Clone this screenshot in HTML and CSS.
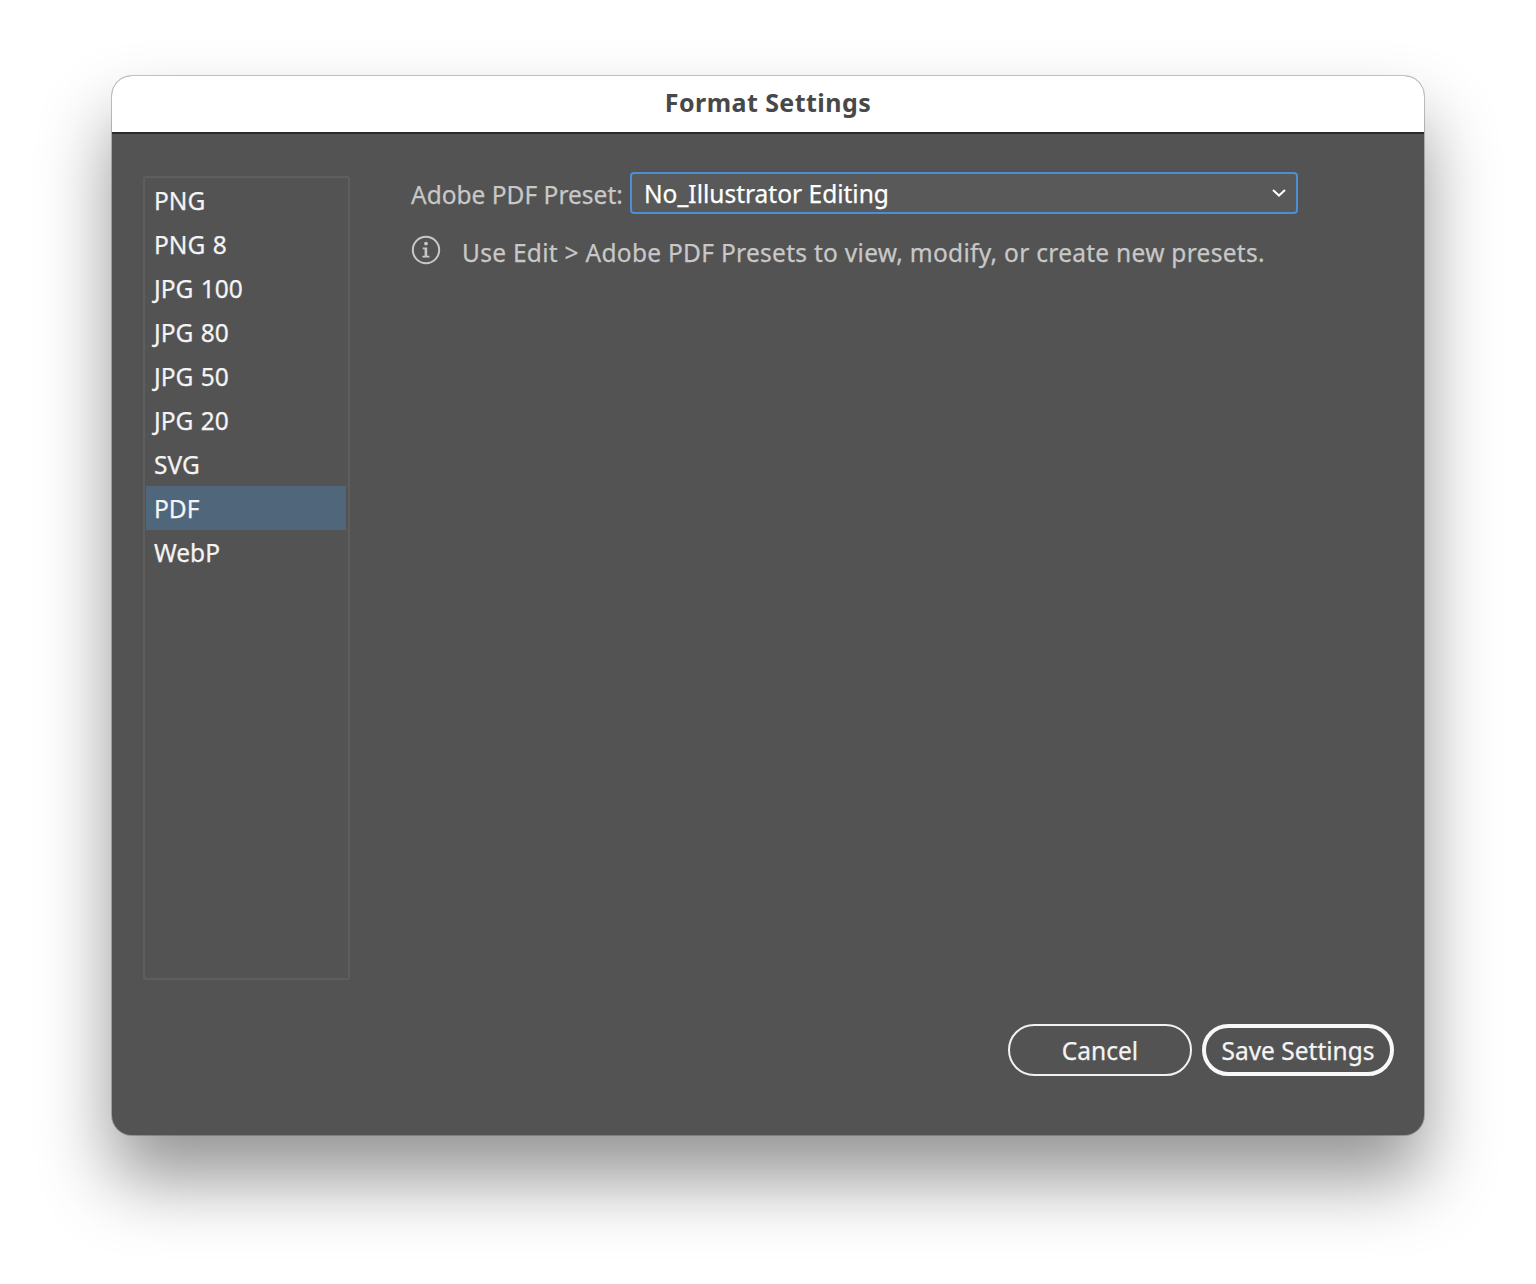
FILE: index.html
```html
<!DOCTYPE html>
<html lang="en">
<head>
<meta charset="utf-8">
<title>Format Settings</title>
<link rel="stylesheet" href="styles.css">
</head>
<body>
<main class="dialog">
  <header class="titlebar">Format Settings</header>
  <div class="content">
    <div class="panes">
      <ul class="format-list">
        <li class="format-item">PNG</li>
        <li class="format-item">PNG 8</li>
        <li class="format-item">JPG 100</li>
        <li class="format-item">JPG 80</li>
        <li class="format-item">JPG 50</li>
        <li class="format-item">JPG 20</li>
        <li class="format-item">SVG</li>
        <li class="format-item selected">PDF</li>
        <li class="format-item">WebP</li>
      </ul>
      <section class="settings">
        <div class="preset-row">
          <span class="preset-label">Adobe PDF Preset:</span>
          <div class="select">
            <span class="select-value">No_Illustrator Editing</span>
            <svg class="chevron" width="14" height="8" viewBox="0 0 14 8" aria-hidden="true"><path d="M1 1l6 5.6L13 1" fill="none" stroke="#fff" stroke-width="2"/></svg>
          </div>
        </div>
        <div class="info-row">
          <svg class="info-icon" width="30" height="30" viewBox="0 0 30 30" aria-hidden="true"><circle cx="15" cy="15" r="13.2" fill="none" stroke="#c8c8c8" stroke-width="2"/><circle cx="15" cy="8.6" r="1.9" fill="#c8c8c8"/><path d="M11.8 12.6h4.4v8.2h2.2v1.7h-7v-1.7h2.2v-6.5h-1.8z" fill="#c8c8c8"/></svg>
          <span class="info-text">Use Edit &gt; Adobe PDF Presets to view, modify, or create new presets.</span>
        </div>
      </section>
    </div>
    <div class="actions">
      <button class="btn btn-cancel" type="button">Cancel</button>
      <button class="btn btn-primary" type="button">Save Settings</button>
    </div>
  </div>
</main>
</body>
</html>
```
FILE: styles.css
```css
* { box-sizing: border-box; }
html, body { margin: 0; height: 100%; }
body {
  background: #fff;
  padding: 76px 112px 0;
  font-family: "Noto Sans", "DejaVu Sans", sans-serif;
  overflow: hidden;
  -webkit-text-stroke: .25px currentColor;
}
.dialog {
  width: 1312px;
  height: 1059px;
  border-radius: 20px;
  overflow: hidden;
  display: flex;
  flex-direction: column;
  background: #535353;
  box-shadow: 0 0 0 1px rgba(0,0,0,.22), 0 44px 72px rgba(0,0,0,.42);
}
.titlebar {
  height: 58px;
  flex: none;
  background: #fff;
  border-bottom: 2px solid #2b2b2b;
  color: #484848;
  font-size: 25px;
  font-weight: 700;
  letter-spacing: .45px;
  text-align: center;
  line-height: 53px;
  -webkit-text-stroke: 0;
}
.content {
  flex: 1;
  display: flex;
  flex-direction: column;
  padding: 42px 30px 59px 31px;
}
.panes { display: flex; flex: none; height: 804px; }
.format-list {
  list-style: none;
  margin: 0;
  padding: 0 2px 0 1px;
  width: 207px;
  flex: none;
  border: 2px solid #5e5e5e;
  border-radius: 3px;
}
.format-item {
  height: 44px;
  padding-left: 8px;
  color: #f4f4f4;
  font-size: 24.5px;
  line-height: 46px;
  word-spacing: 1px;
}
.format-item.selected { background: #50667b; }
.settings { margin-left: 61px; margin-top: -4px; width: 888px; flex: none; }
.preset-row { display: flex; align-items: center; height: 42px; }
.preset-label {
  color: #c8c8c8;
  font-size: 24.5px;
  margin-top: 3px;
  width: 219px;
  flex: none;
  white-space: nowrap;
}
.select {
  width: 668px;
  height: 42px;
  flex: none;
  border: 2px solid #4a90d9;
  border-radius: 4px;
  background: #595959;
  display: flex;
  align-items: center;
  justify-content: space-between;
  padding: 0 10px 0 12px;
  color: #fff;
  font-size: 24.5px;
}
.info-row { display: flex; align-items: flex-start; margin-top: 21px; color: #c8c8c8; }
.info-icon { flex: none; }
.info-text { margin-left: 21px; font-size: 24.5px; letter-spacing: .28px; line-height: 36px; white-space: nowrap; }
.actions { display: flex; justify-content: flex-end; gap: 10px; margin-top: 44px; }
.btn {
  height: 52px;
  background: transparent;
  color: #f4f4f4;
  font-family: inherit;
  font-size: 24.5px;
  border-radius: 26px;
  padding: 0;
}
.btn-cancel { width: 184px; border: 2px solid #f2f2f2; }
.btn-primary { width: 192px; border: 4px solid #f8f8f8; }
```
